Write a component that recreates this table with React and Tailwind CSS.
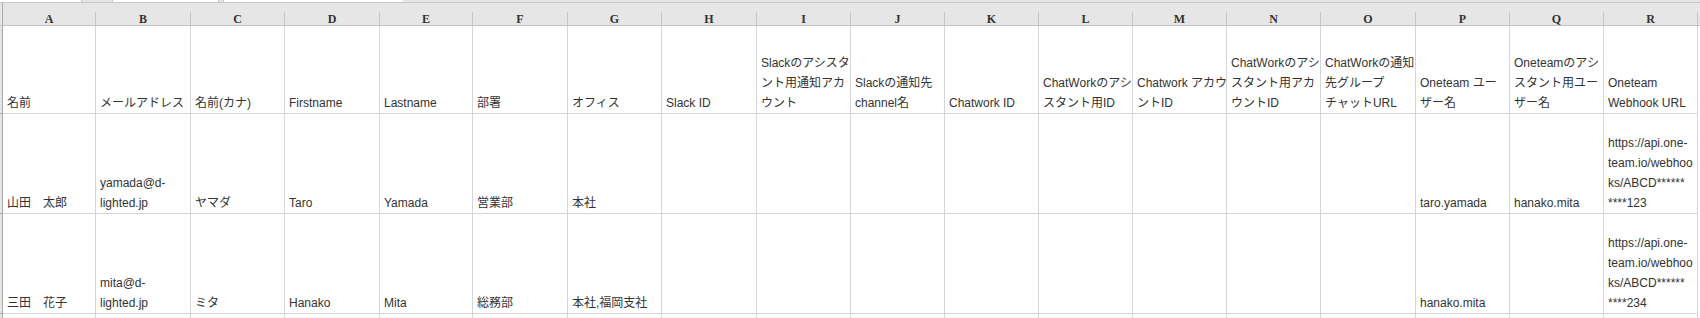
import React from 'react';

const widths = [93, 95, 94, 95, 93, 95, 94, 95, 94, 94, 94, 94, 94, 94, 95, 94, 94, 94];
const letters = ['A', 'B', 'C', 'D', 'E', 'F', 'G', 'H', 'I', 'J', 'K', 'L', 'M', 'N', 'O', 'P', 'Q', 'R'];

const rows = [
  {
    h: 'h-[88px]',
    cells: [
      ['名前'],
      ['メールアドレス'],
      ['名前(カナ)'],
      ['Firstname'],
      ['Lastname'],
      ['部署'],
      ['オフィス'],
      ['Slack ID'],
      ['Slackのアシスタ', 'ント用通知アカ', 'ウント'],
      ['Slackの通知先', 'channel名'],
      ['Chatwork ID'],
      ['ChatWorkのアシ', 'スタント用ID'],
      ['Chatwork アカウ', 'ントID'],
      ['ChatWorkのアシ', 'スタント用アカ', 'ウントID'],
      ['ChatWorkの通知', '先グループ', 'チャットURL'],
      ['Oneteam ユー', 'ザー名'],
      ['Oneteamのアシ', 'スタント用ユー', 'ザー名'],
      ['Oneteam', 'Webhook URL'],
    ],
  },
  {
    h: 'h-[100px]',
    cells: [
      ['山田　太郎'],
      ['yamada@d-', 'lighted.jp'],
      ['ヤマダ'],
      ['Taro'],
      ['Yamada'],
      ['営業部'],
      ['本社'],
      [], [], [], [], [], [], [], [],
      ['taro.yamada'],
      ['hanako.mita'],
      ['https://api.one-', 'team.io/webhoo', 'ks/ABCD******', '****123'],
    ],
  },
  {
    h: 'h-[100px]',
    cells: [
      ['三田　花子'],
      ['mita@d-', 'lighted.jp'],
      ['ミタ'],
      ['Hanako'],
      ['Mita'],
      ['総務部'],
      ['本社,福岡支社'],
      [], [], [], [], [], [], [], [],
      ['hanako.mita'],
      [],
      ['https://api.one-', 'team.io/webhoo', 'ks/ABCD******', '****234'],
    ],
  },
  { h: 'h-[10px]', cells: Array.from({ length: 18 }, () => []) },
];

const Cell = ({ lines, width }) => (
  <div
    className="shrink-0 border-r border-b border-[#d6d6d6] flex flex-col justify-end overflow-hidden pl-[4px]"
    style={{ width }}
  >
    {lines.map((t, i) => (
      <div key={i} className="leading-[20px] whitespace-nowrap">{t}</div>
    ))}
  </div>
);

export default function App() {
  return (
    <div className="w-[1700px] h-[318px] overflow-hidden bg-white text-[12px] text-[#333] font-['Liberation_Sans','Noto_Sans_CJK_JP',sans-serif]">
      {/* formula bar edge */}
      <div className="h-[3px] flex bg-[#e6e6e6] border-b border-[#c8c8c8]">
        <div className="w-[82px] bg-white border-r border-[#c8c8c8]" />
        <div className="w-[30px]" />
        <div className="w-[107px] bg-white border-x border-[#c8c8c8]" />
        <div className="w-[4px]" />
        <div className="w-[180px] bg-white border-l border-[#c8c8c8]" />
      </div>

      {/* column letters */}
      <div className="h-[23px] flex bg-[#e6e6e6] border-b border-[#c4c4c4]">
        <div className="w-[3px] shrink-0 border-r border-[#a8a8a8]" />
        {widths.map((w, i) => (
          <div
            key={i}
            className="shrink-0 mt-[9px] border-r border-[#c6c6c6] flex items-center justify-center text-[12px] text-[#333] font-['Liberation_Serif',serif] font-bold"
            style={{ width: w }}
          >
            {letters[i]}
          </div>
        ))}
      </div>

      {/* sheet body */}
      {rows.map((r, ri) => (
        <div key={ri} className={`flex ${r.h}`}>
          <div className="w-[3px] shrink-0 bg-[#e6e6e6] border-r border-b border-[#a8a8a8]" />
          {r.cells.map((lines, ci) => (
            <Cell key={ci} lines={lines} width={widths[ci]} />
          ))}
        </div>
      ))}
    </div>
  );
}
